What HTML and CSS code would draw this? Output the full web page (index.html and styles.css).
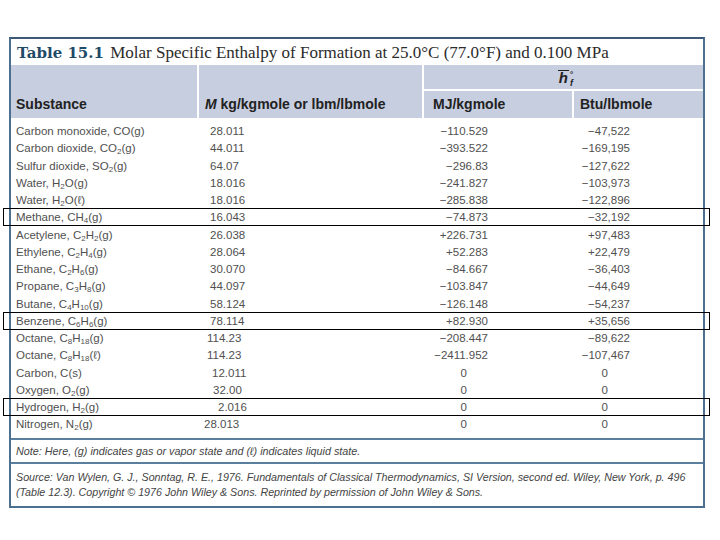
FILE: index.html
```html
<!DOCTYPE html>
<html>
<head>
<meta charset="utf-8">
<link rel="stylesheet" href="styles.css">
</head>
<body>
<div class="page">
  <div class="table">
    <div class="title"><b>Table 15.1</b> Molar Specific Enthalpy of Formation at 25.0°C (77.0°F) and 0.100 MPa</div>
    <div class="head">
      <div class="hc h-sub"><span>Substance</span></div>
      <div class="hc h-m"><span><i>M</i> kg/kgmole or lbm/lbmole</span></div>
      <div class="hc h-hf"><span class="hsym"><span class="hbar">h</span><span class="stack"><span class="deg">°</span><span class="f">f</span></span></span></div>
      <div class="hc h-mj"><span>MJ/kgmole</span></div>
      <div class="hc h-btu"><span>Btu/lbmole</span></div>
    </div>
    <div class="body">
      <div class="row"><span>Carbon monoxide, CO(g)</span><span class="m">28.011</span><span class="mj">−110.529</span><span class="btu">−47,522</span></div>
      <div class="row"><span>Carbon dioxide, CO<sub>2</sub>(g)</span><span class="m">44.011</span><span class="mj">−393.522</span><span class="btu">−169,195</span></div>
      <div class="row"><span>Sulfur dioxide, SO<sub>2</sub>(g)</span><span class="m">64.07</span><span class="mj">−296.83</span><span class="btu">−127,622</span></div>
      <div class="row"><span>Water, H<sub>2</sub>O(g)</span><span class="m">18.016</span><span class="mj">−241.827</span><span class="btu">−103,973</span></div>
      <div class="row"><span>Water, H<sub>2</sub>O(ℓ)</span><span class="m">18.016</span><span class="mj">−285.838</span><span class="btu">−122,896</span></div>
      <div class="row mark"><span>Methane, CH<sub>4</sub>(g)</span><span class="m">16.043</span><span class="mj">−74.873</span><span class="btu">−32,192</span></div>
      <div class="row"><span>Acetylene, C<sub>2</sub>H<sub>2</sub>(g)</span><span class="m">26.038</span><span class="mj">+226.731</span><span class="btu">+97,483</span></div>
      <div class="row"><span>Ethylene, C<sub>2</sub>H<sub>4</sub>(g)</span><span class="m">28.064</span><span class="mj">+52.283</span><span class="btu">+22,479</span></div>
      <div class="row"><span>Ethane, C<sub>2</sub>H<sub>6</sub>(g)</span><span class="m">30.070</span><span class="mj">−84.667</span><span class="btu">−36,403</span></div>
      <div class="row"><span>Propane, C<sub>3</sub>H<sub>8</sub>(g)</span><span class="m">44.097</span><span class="mj">−103.847</span><span class="btu">−44,649</span></div>
      <div class="row"><span>Butane, C<sub>4</sub>H<sub>10</sub>(g)</span><span class="m">58.124</span><span class="mj">−126.148</span><span class="btu">−54,237</span></div>
      <div class="row mark"><span>Benzene, C<sub>6</sub>H<sub>6</sub>(g)</span><span class="m">78.114</span><span class="mj">+82.930</span><span class="btu">+35,656</span></div>
      <div class="row"><span>Octane, C<sub>8</sub>H<sub>18</sub>(g)</span><span class="m m-oct">114.23</span><span class="mj">−208.447</span><span class="btu">−89,622</span></div>
      <div class="row"><span>Octane, C<sub>8</sub>H<sub>18</sub>(ℓ)</span><span class="m m-oct">114.23</span><span class="mj">−2411.952</span><span class="btu">−107,467</span></div>
      <div class="row"><span>Carbon, C(s)</span><span class="m m-c">12.011</span><span class="mj zero">0</span><span class="btu zero">0</span></div>
      <div class="row"><span>Oxygen, O<sub>2</sub>(g)</span><span class="m m-o">32.00</span><span class="mj zero">0</span><span class="btu zero">0</span></div>
      <div class="row mark"><span>Hydrogen, H<sub>2</sub>(g)</span><span class="m m-h">2.016</span><span class="mj zero">0</span><span class="btu zero">0</span></div>
      <div class="row"><span>Nitrogen, N<sub>2</sub>(g)</span><span class="m m-n">28.013</span><span class="mj zero">0</span><span class="btu zero">0</span></div>
    </div>
    <div class="note">Note: Here, (g) indicates gas or vapor state and (ℓ) indicates liquid state.</div>
    <div class="source">Source: Van Wylen, G. J., Sonntag, R. E., 1976. Fundamentals of Classical Thermodynamics, SI Version, second ed. Wiley, New York, p. 496<br>(Table 12.3). Copyright © 1976 John Wiley &amp; Sons. Reprinted by permission of John Wiley &amp; Sons.</div>
  </div>
</div>
</body>
</html>
```

FILE: styles.css
```css
html, body {
  margin: 0;
  padding: 0;
  background: #ffffff;
}

.page {
  padding: 37px 0 0 9px;
}

.table {
  width: 692px;
  border: 2px solid #4e7090;
  border-top-color: #3e5a76;
  font-family: "Liberation Sans", Arial, sans-serif;
  color: #444;
}

.title {
  height: 26px;
  box-sizing: border-box;
  padding: 5px 0 0 6px;
  font-family: "Liberation Serif", "Times New Roman", serif;
  font-size: 17px;
  line-height: 18px;
  color: #2b2b2b;
  white-space: nowrap;
}

.title b {
  color: #1f4b68;
  font-family: "DejaVu Serif", serif;
  font-size: 15px;
  margin-right: 2px;
}

.head {
  display: grid;
  grid-template-columns: 186px 223px 148px 129px;
  grid-template-rows: 24px 27px;
  gap: 2px;
  background: #ffffff;
  font-weight: bold;
  font-size: 14px;
  color: #222;
}

.hc {
  background: #c7cee0;
  display: flex;
  align-items: center;
  white-space: nowrap;
}

.h-sub {
  grid-row: 1 / 3;
  grid-column: 1;
  align-items: flex-end;
  padding: 0 0 6px 5px;
}

.h-m {
  grid-row: 1 / 3;
  grid-column: 2;
  align-items: flex-end;
  padding: 0 0 6px 6px;
}

.h-hf {
  grid-row: 1;
  grid-column: 3 / 5;
  justify-content: center;
}

.h-mj {
  grid-row: 2;
  grid-column: 3;
  padding: 0 0 2px 9px;
}

.h-btu {
  grid-row: 2;
  grid-column: 4;
  padding: 0 0 2px 6px;
}

.hsym {
  display: inline-flex;
  align-items: flex-end;
  font-style: italic;
  font-size: 15px;
  padding-left: 4px;
}

.hbar {
  border-top: 1.5px solid #222;
  line-height: 14px;
  padding: 0 1px;
}

.stack {
  display: inline-flex;
  flex-direction: column;
  font-size: 9px;
  line-height: 8px;
  margin-left: 1px;
  margin-bottom: -2px;
}

.deg {
  font-style: normal;
  font-size: 8px;
}

.body {
  padding: 4.5px 0 5px;
  border-bottom: 2px solid #5a7e9e;
}

.row {
  position: relative;
  display: grid;
  grid-template-columns: 188px 225px 150px 129px;
  height: 17.25px;
  align-items: center;
  font-size: 11.5px;
  color: #505050;
  white-space: nowrap;
}

.row > span:first-child {
  padding-left: 5px;
}

.row sub {
  font-size: 8px;
  vertical-align: -2px;
  line-height: 0;
}

.m {
  padding-left: 11px;
}

.m-oct { padding-left: 8px; }
.m-c { padding-left: 13px; }
.m-o { padding-left: 14px; }
.m-h { padding-left: 19px; }
.m-n { padding-left: 5px; }

.mj {
  text-align: right;
  padding-right: 86px;
}

.btu {
  text-align: right;
  padding-right: 73px;
}

.mj.zero {
  padding-right: 107px;
}

.btu.zero {
  padding-right: 95px;
}

.mark::after {
  content: "";
  position: absolute;
  left: -8px;
  right: -7px;
  top: -0.5px;
  bottom: 0;
  border: 1px solid #000;
}

.note {
  height: 24px;
  box-sizing: border-box;
  padding: 5px 0 0 5px;
  font-size: 10.8px;
  font-style: italic;
  color: #444;
  border-bottom: 2px solid #5a7e9e;
  white-space: nowrap;
}

.source {
  padding: 6px 0 6px 5px;
  font-size: 10.7px;
  line-height: 15px;
  font-style: italic;
  color: #444;
  white-space: nowrap;
}
```
